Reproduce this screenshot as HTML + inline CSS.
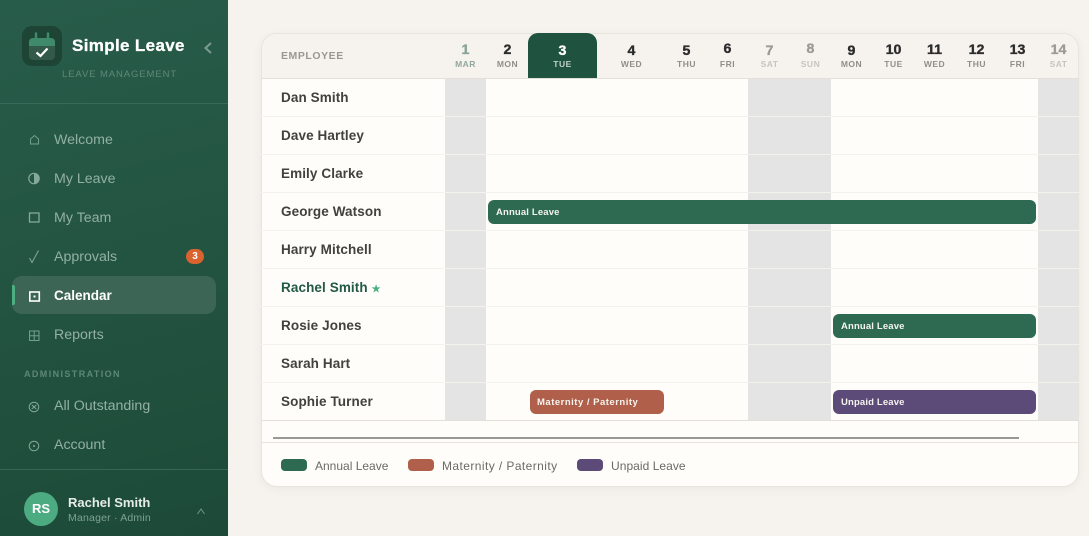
<!DOCTYPE html>
<html><head><meta charset="utf-8"><style>
*{box-sizing:border-box;margin:0;padding:0}
html,body{width:1089px;height:536px;overflow:hidden;background:#f6f3ee;font-family:"Liberation Sans",sans-serif}
.a{position:absolute}
.t{position:absolute;white-space:nowrap;line-height:1}
#side{left:0;top:0;width:228px;height:536px;background:linear-gradient(165deg,#285c4a 0%,#235441 50%,#1d4a38 100%)}
.nav{color:#93b0a4;font-size:14.2px;left:54px}
#card{left:261px;top:33px;width:818px;height:454px;background:#fefdf9;border:1px solid #e7e4de;border-radius:16px;box-shadow:0 2px 10px rgba(0,0,0,.05);overflow:hidden}
.n{width:41px;text-align:center;font-weight:bold;font-size:13.5px;color:#2b2b2b;top:43px;transform:scaleX(1.05);-webkit-text-stroke:.35px currentColor}
.d{width:41px;text-align:center;font-size:8.5px;font-weight:bold;letter-spacing:.5px;color:#8f8f88;top:60px}
.we{background:#e4e4e4}
.name{left:281px;font-size:13.5px;color:#41413e;font-weight:bold;letter-spacing:.1px}
.row{left:261px;width:818px;height:1px;background:#f3f2ed}
.bar{height:24px;border-radius:6px;color:#f6f3ee;font-size:9.5px;font-weight:bold;line-height:25px;letter-spacing:.15px}
.lg{top:459px;width:26px;height:12px;border-radius:4px}
.lt{top:459.5px;font-size:12px;color:#6b6b66}
</style></head><body>
<div id="side" class="a"></div>
<div class="a" style="left:22px;top:26px;width:40px;height:40px;border-radius:10px;background:#1d4434"></div>
<svg class="a" style="left:22px;top:26px" width="40" height="40" viewBox="0 0 40 40"><rect x="7" y="12" width="26" height="22" rx="4" fill="#33594a"/><path d="M7 20V16a4 4 0 0 1 4-4h18a4 4 0 0 1 4 4v4z" fill="#3f8a6b"/><path d="M14 7.5v6M26 7.5v6" stroke="#3f8a6b" stroke-width="2.5" stroke-linecap="round"/><path d="M14.5 26.5l4 3.5 7-7.5" stroke="#fff" stroke-width="2.2" fill="none"/></svg>
<div class="t" style="left:72px;top:37px;font-size:17px;font-weight:bold;color:#fff;letter-spacing:.35px;-webkit-text-stroke:.3px #fff">Simple Leave</div>
<div class="t" style="left:62px;top:70px;font-size:9.5px;color:#5f8878;letter-spacing:.9px">LEAVE MANAGEMENT</div>
<svg class="a" style="left:200px;top:40px" width="16" height="16"><path d="M11 3l-5.5 5 5.500 5" stroke="#7a9d90" stroke-width="2" fill="none"/></svg>
<div class="a" style="left:0;top:103px;width:228px;height:1px;background:#386a58"></div>

<svg class="a" style="left:27px;top:132px" width="15" height="15" fill="none" stroke="#72a08e" stroke-width="1"><path d="M3.5 12V7l4-3.500L11.500 7v5z"/></svg>
<div class="t nav" style="top:133px">Welcome</div>
<svg class="a" style="left:27px;top:171px" width="15" height="15"><circle cx="7" cy="7.5" r="5.2" fill="none" stroke="#85a99a" stroke-width="1.2"/><path d="M7 2.300a5.200 5.200 0 0 1 0 10.400z" fill="#85a99a"/></svg>
<div class="t nav" style="top:172px">My Leave</div>
<svg class="a" style="left:27px;top:210px" width="15" height="15" fill="none" stroke="#85a99a" stroke-width="1.3"><rect x="2.5" y="3" width="9.5" height="9"/></svg>
<div class="t nav" style="top:211px">My Team</div>
<svg class="a" style="left:27px;top:249px" width="15" height="15" fill="none" stroke="#85a99a" stroke-width="1"><path d="M2.5 9l2.500 4.500L11.500 1.500"/></svg>
<div class="t nav" style="top:250px">Approvals</div>
<div class="t" style="left:186px;top:249px;width:18px;height:15px;border-radius:8px;background:#d9622f;color:#fff;font-size:10px;font-weight:bold;text-align:center;line-height:16px">3</div>

<div class="a" style="left:12px;top:276px;width:204px;height:38px;border-radius:10px;background:#3c6556"></div>
<div class="a" style="left:12px;top:285px;width:3px;height:20px;background:#4caf82;border-radius:0 2px 2px 0"></div>
<svg class="a" style="left:27px;top:289px" width="15" height="15"><rect x="2.8" y="3" width="9.5" height="9" fill="none" stroke="#fff" stroke-width="1.6"/><rect x="6.500" y="6.500" width="2" height="2" fill="#fff"/></svg>
<div class="t nav" style="top:289px;color:#fff;font-weight:bold;font-size:13.5px">Calendar</div>
<svg class="a" style="left:27px;top:328px" width="15" height="15" fill="none" stroke="#72a08e" stroke-width="1"><rect x="2.5" y="3" width="9.5" height="9.5"/><path d="M7.200 3v9.500M2.500 7.700H12"/></svg>
<div class="t nav" style="top:328px">Reports</div>
<div class="t" style="left:24px;top:370px;font-size:9px;color:#5e8777;letter-spacing:1.4px;font-weight:bold">ADMINISTRATION</div>
<svg class="a" style="left:27px;top:399px" width="15" height="15" fill="none" stroke="#85a99a" stroke-width="1"><circle cx="7" cy="8" r="4.8"/><path d="M4.800 6l4.500 4M9.300 6l-4.500 4"/></svg>
<div class="t nav" style="top:399px">All Outstanding</div>
<svg class="a" style="left:27px;top:438px" width="15" height="15"><circle cx="7" cy="8" r="4.8" fill="none" stroke="#85a99a"/><circle cx="7" cy="8" r="1" fill="#85a99a"/></svg>
<div class="t nav" style="top:438px">Account</div>
<div class="a" style="left:0;top:469px;width:228px;height:1px;background:#356553"></div>
<div class="t" style="left:24px;top:492px;width:34px;height:34px;border-radius:50%;background:#4dab82;color:#fff;font-weight:bold;font-size:13px;text-align:center;line-height:34px">RS</div>
<div class="t" style="left:68px;top:496px;font-size:13px;font-weight:bold;color:#e6ece8">Rachel Smith</div>
<div class="t" style="left:68px;top:513px;font-size:10.5px;color:#7fa193;letter-spacing:.2px">Manager · Admin</div>
<svg class="a" style="left:194px;top:505px" width="14" height="14" fill="none" stroke="#6f9584"><path d="M3.500 9l3.500-5 3.500 5"/></svg>

<div id="card" class="a"></div>
<div class="a" style="left:262px;top:34px;width:816px;height:44px;background:#f6f3ee;border-radius:15px 15px 0 0"></div>
<div class="a" style="left:261px;top:78px;width:818px;height:1px;background:#e3e0da"></div>
<div class="a" style="left:528px;top:33px;width:69px;height:45px;background:#20533f;border-radius:10px 10px 0 0"></div>
<div class="t" style="left:281px;top:51px;font-size:10.5px;font-weight:bold;color:#989890;letter-spacing:.55px">EMPLOYEE</div>

<div class="t n" style="left:445px;color:#87a397">1</div><div class="t d" style="left:445px;color:#93a79f">MAR</div>
<div class="t n" style="left:487px">2</div><div class="t d" style="left:487px">MON</div>
<div class="t n" style="left:542px;color:#fff;top:44px">3</div><div class="t d" style="left:542px;color:#bfd0c8">TUE</div>
<div class="t n" style="left:611px;top:44px">4</div><div class="t d" style="left:611px">WED</div>
<div class="t n" style="left:666px;top:44px">5</div><div class="t d" style="left:666px">THU</div>
<div class="t n" style="left:707px;top:42px">6</div><div class="t d" style="left:707px">FRI</div>
<div class="t n" style="left:749px;color:#9b9b96;top:44px">7</div><div class="t d" style="left:749px;color:#c5c5c0">SAT</div>
<div class="t n" style="left:790px;color:#9b9b96;top:42px">8</div><div class="t d" style="left:790px;color:#c5c5c0">SUN</div>
<div class="t n" style="left:831px;top:44px">9</div><div class="t d" style="left:831px">MON</div>
<div class="t n" style="left:873px">10</div><div class="t d" style="left:873px">TUE</div>
<div class="t n" style="left:914px">11</div><div class="t d" style="left:914px">WED</div>
<div class="t n" style="left:956px">12</div><div class="t d" style="left:956px">THU</div>
<div class="t n" style="left:997px">13</div><div class="t d" style="left:997px">FRI</div>
<div class="t n" style="left:1038px;color:#9b9b96">14</div><div class="t d" style="left:1038px;color:#c5c5c0">SAT</div>

<div class="a we" style="left:445px;top:79px;width:41px;height:341px"></div>
<div class="a we" style="left:748px;top:79px;width:83px;height:341px"></div>
<div class="a we" style="left:1038px;top:79px;width:40px;height:341px"></div>

<div class="a row" style="top:116px"></div><div class="a row" style="top:154px"></div><div class="a row" style="top:192px"></div><div class="a row" style="top:230px"></div><div class="a row" style="top:268px"></div><div class="a row" style="top:306px"></div><div class="a row" style="top:344px"></div><div class="a row" style="top:382px"></div>
<div class="a" style="left:261px;top:420px;width:818px;height:1px;background:#e3e0da"></div>

<div class="t name" style="top:91px">Dan Smith</div>
<div class="t name" style="top:129px">Dave Hartley</div>
<div class="t name" style="top:167px">Emily Clarke</div>
<div class="t name" style="top:205px">George Watson</div>
<div class="t name" style="top:243px">Harry Mitchell</div>
<div class="t name" style="top:281px;color:#235a45">Rachel Smith <span style="color:#4caf82;font-size:10px">★</span></div>
<div class="t name" style="top:319px">Rosie Jones</div>
<div class="t name" style="top:357px">Sarah Hart</div>
<div class="t name" style="top:395px">Sophie Turner</div>

<div class="a bar" style="left:488px;top:200px;width:548px;background:#2d6a51;padding-left:8px">Annual Leave</div>
<div class="a bar" style="left:833px;top:314px;width:203px;background:#2d6a51;padding-left:8px">Annual Leave</div>
<div class="a bar" style="left:530px;top:390px;width:134px;background:#b0604a;padding-left:7px;letter-spacing:.5px">Maternity / Paternity</div>
<div class="a bar" style="left:833px;top:390px;width:203px;background:#5c4a78;padding-left:8px">Unpaid Leave</div>

<div class="a" style="left:273px;top:437px;width:746px;height:2px;background:#989894"></div>
<div class="a" style="left:261px;top:442px;width:818px;height:1px;background:#e7e4de"></div>
<div class="a lg" style="left:281px;background:#2d6a51"></div><div class="t lt" style="left:315px">Annual Leave</div>
<div class="a lg" style="left:408px;background:#b0604a"></div><div class="t lt" style="left:442px;letter-spacing:.42px">Maternity / Paternity</div>
<div class="a lg" style="left:577px;background:#5c4a78"></div><div class="t lt" style="left:611px;letter-spacing:.05px">Unpaid Leave</div>
</body></html>
